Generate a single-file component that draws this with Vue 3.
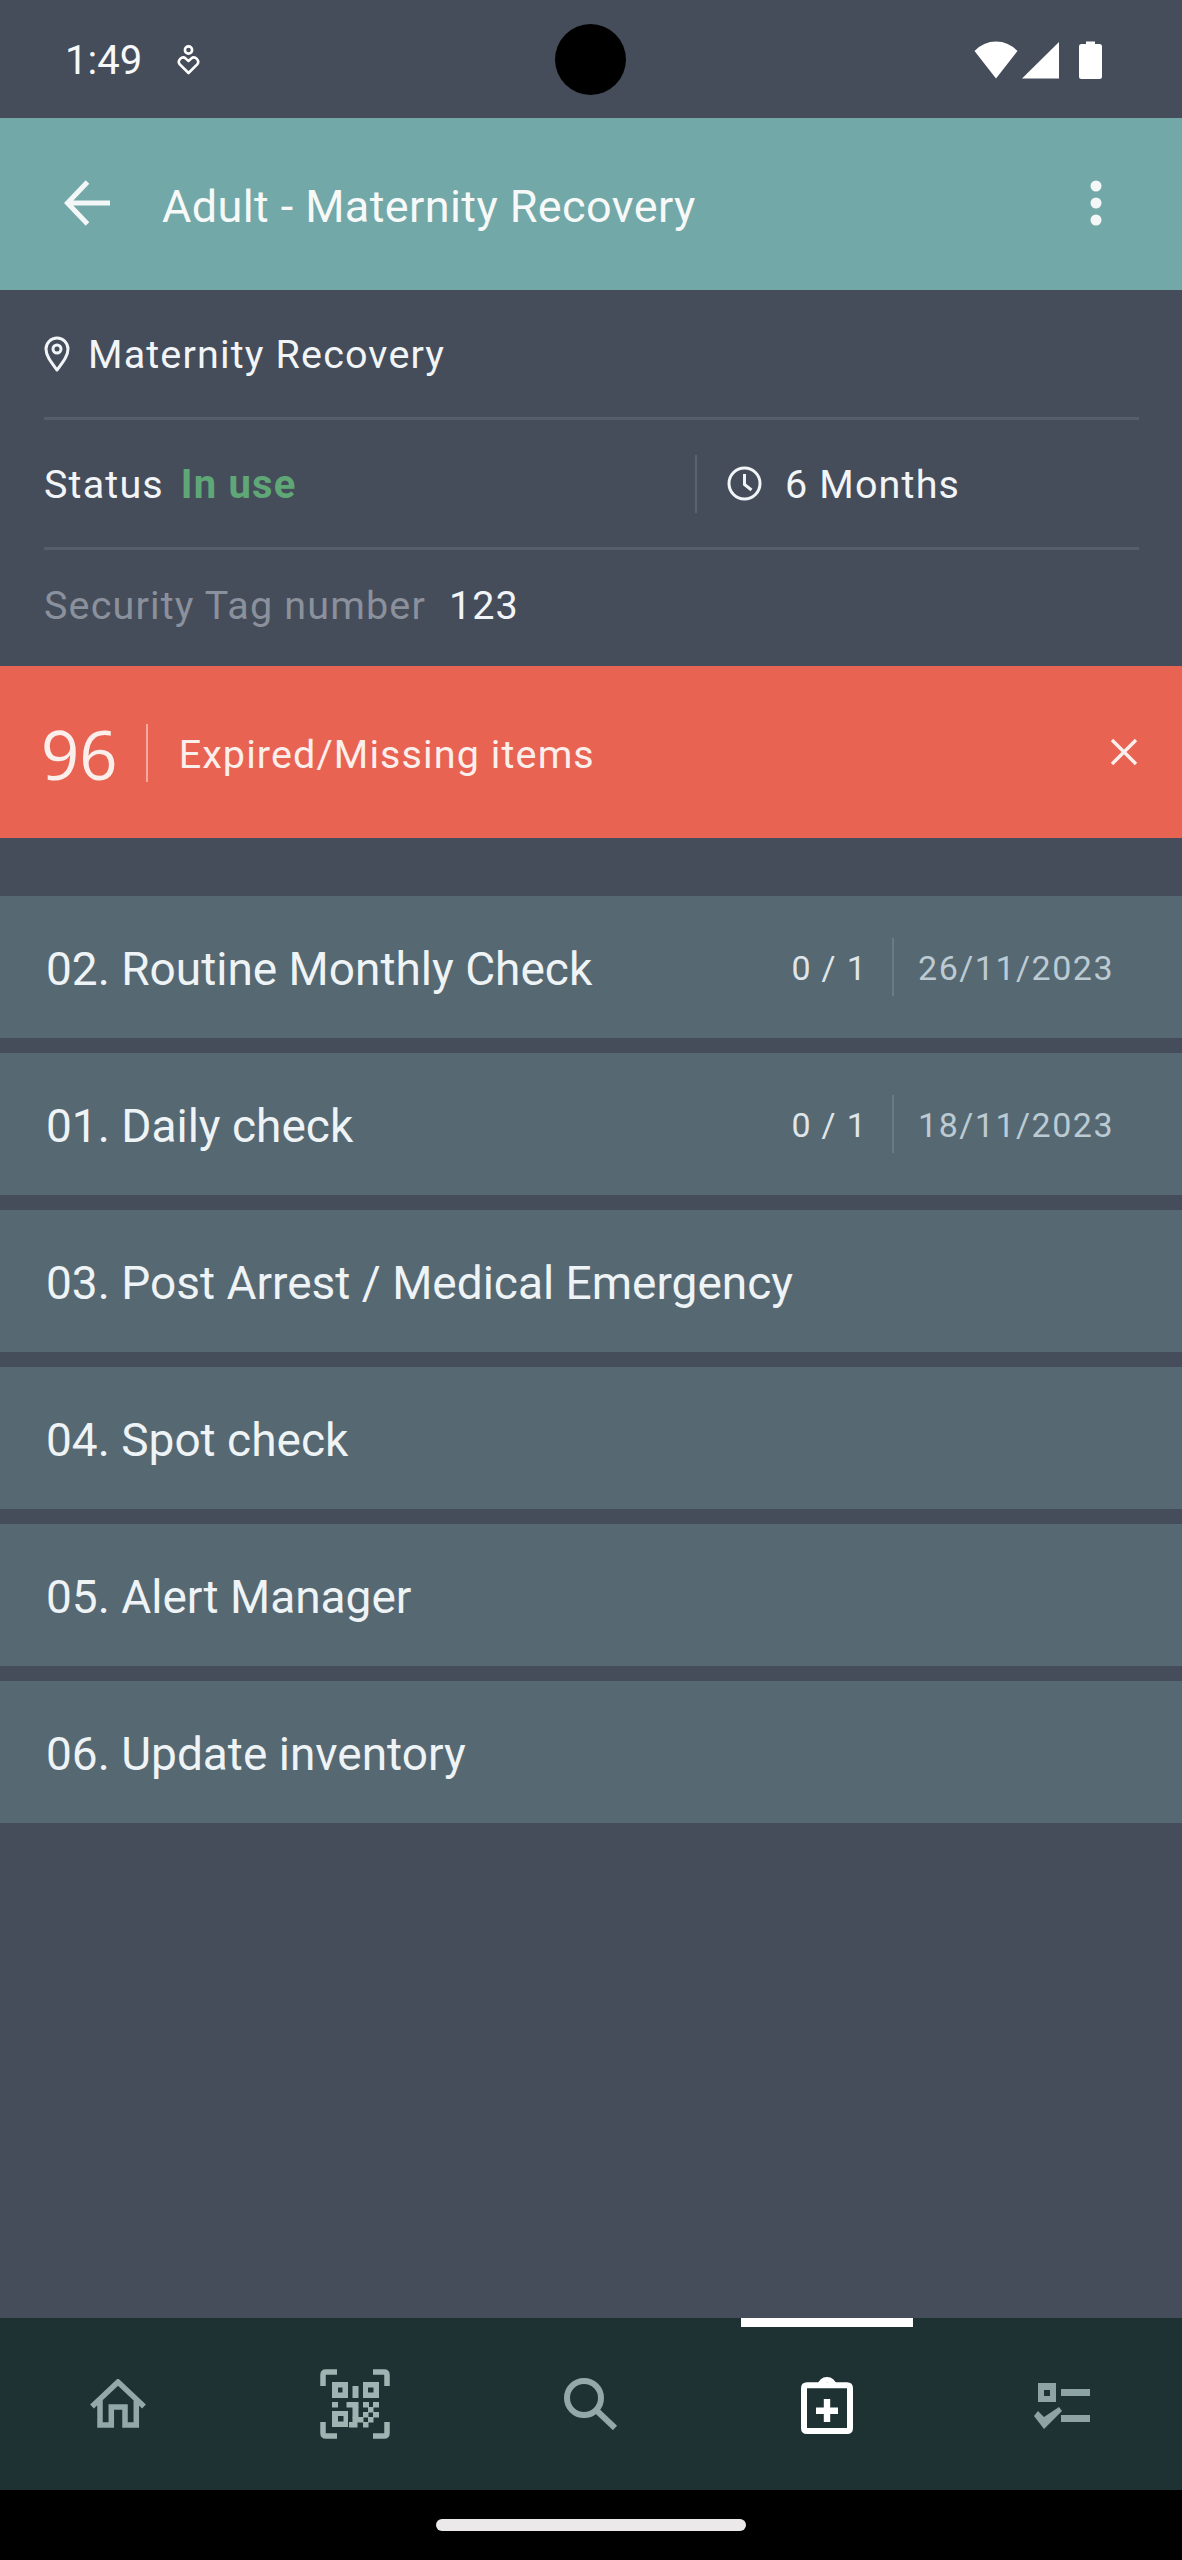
<script setup>
const items = [
  { title: '02. Routine Monthly Check', count: '0 / 1', date: '26/11/2023' },
  { title: '01. Daily check', count: '0 / 1', date: '18/11/2023' },
  { title: '03. Post Arrest / Medical Emergency' },
  { title: '04. Spot check' },
  { title: '05. Alert Manager' },
  { title: '06. Update inventory' },
]
</script>

<template>
  <div class="screen">
    <div class="status-bar">
      <span class="time">1:49</span>
      <svg class="heart" width="23" height="30" viewBox="0 0 23 30" fill="none" stroke="#fff" stroke-width="2.6">
        <circle cx="11.5" cy="5" r="3.6" />
        <path d="M11.5 28 L2.8 19.4 A4.2 4.2 0 0 1 8.8 13.6 L11.5 16 L14.2 13.6 A4.2 4.2 0 0 1 20.2 19.4 Z" stroke-linejoin="round" />
      </svg>
      <div class="camera"></div>
      <div class="sys-icons">
        <svg width="44" height="38" viewBox="0 0 44 38" fill="#fff"><path d="M22 37.5 L0.5 10 Q9.5 0.5 22 0.5 Q34.5 0.5 43.5 10 Z" /></svg>
        <svg width="37" height="38" viewBox="0 0 37 38" fill="#fff"><path d="M37 1 V37.5 H0 Z" /></svg>
        <svg class="battery" width="23" height="38" viewBox="0 0 23 38" fill="#fff"><path d="M7 0.5 H16 V3 H20.5 Q23 3 23 5.5 V35.5 Q23 38 20.5 38 H2.5 Q0 38 0 35.5 V5.5 Q0 3 2.5 3 H7 Z" /></svg>
      </div>
    </div>

    <header class="app-bar">
      <svg class="back" width="46" height="46" viewBox="0 0 46 46" fill="none" stroke="#f4f7f7" stroke-width="5">
        <path d="M46 23 H4 M23.5 2 L3.5 23 L23.5 44" />
      </svg>
      <h1 class="title">Adult - Maternity Recovery</h1>
      <svg class="kebab" width="12" height="46" viewBox="0 0 12 46" fill="#f4f7f7">
        <circle cx="6" cy="6" r="5.5" /><circle cx="6" cy="23" r="5.5" /><circle cx="6" cy="40" r="5.5" />
      </svg>
    </header>

    <section class="info">
      <div class="info-row">
        <svg class="pin" width="26" height="36" viewBox="0 0 26 36" fill="none" stroke="#f2f5f8" stroke-width="3">
          <path d="M13 34 C7 26 2 20 2 13 A11 11 0 0 1 24 13 C24 20 19 26 13 34 Z" stroke-linejoin="round" />
          <circle cx="13" cy="13" r="4" />
        </svg>
        <span class="info-text">Maternity Recovery</span>
      </div>
      <div class="info-row">
        <div class="status-cell">
          <span class="info-text">Status</span>
          <span class="in-use">In use</span>
        </div>
        <div class="months-cell">
          <svg width="35" height="35" viewBox="0 0 35 35" fill="none" stroke="#f2f5f8" stroke-width="3">
            <circle cx="17.5" cy="17.5" r="15.5" />
            <path d="M17.5 8 V18.5 L24.5 24" />
          </svg>
          <span class="info-text">6 Months</span>
        </div>
      </div>
      <div class="info-row tag-row">
        <span class="tag-label">Security Tag number</span>
        <span class="info-text">123</span>
      </div>
    </section>

    <div class="banner">
      <span class="banner-count">96</span>
      <span class="banner-text">Expired/Missing items</span>
      <svg class="banner-close" width="28" height="28" viewBox="0 0 28 28" stroke="#fbefec" stroke-width="3.4">
        <path d="M2 2 L26 26 M26 2 L2 26" />
      </svg>
    </div>

    <main class="list">
      <div v-for="item in items" :key="item.title" class="list-item">
        <span class="item-title">{{ item.title }}</span>
        <template v-if="item.date">
          <span class="item-count">{{ item.count }}</span>
          <span class="item-date">{{ item.date }}</span>
        </template>
      </div>
    </main>

    <nav class="nav">
      <div class="nav-item">
        <svg width="56" height="50" viewBox="0 0 56 50" fill="none" stroke="#93a9a9" stroke-width="5.5">
          <path d="M2 27.500 L28 3 L54 27.500 M10 21 V46 H21.300 V28 H35 V46 H46.300 V21" />
        </svg>
      </div>
      <div class="nav-item">
        <svg width="70" height="70" viewBox="0 0 70 70" fill="#9fb3b3">
          <path fill="none" stroke="#9fb3b3" stroke-width="5.5" d="M3 17 V6 Q3 3 6 3 H17 M53 3 H64 Q67 3 67 6 V17 M3 53 V64 Q3 67 6 67 H17 M53 67 H64 Q67 67 67 64 V53" />
          <path fill-rule="evenodd" d="M12 13 H28 V29 H12 Z M18 18.500 V23.500 H22.500 V18.500 Z" />
          <path fill-rule="evenodd" d="M43 13 H59 V29 H43 Z M48 18.500 V23.500 H53.500 V18.500 Z" />
          <rect x="32.500" y="17" width="6" height="12" />
          <rect x="12" y="33" width="6" height="5.500" />
          <rect x="26.500" y="33" width="12" height="5.500" />
          <rect x="43" y="33" width="6" height="5.500" />
          <rect x="53" y="33" width="6" height="5.500" />
          <rect x="32.500" y="38" width="6" height="11" />
          <rect x="48" y="38" width="5.500" height="5.500" />
          <rect x="43" y="43" width="5.500" height="5.500" />
          <rect x="53" y="43" width="6" height="5.500" />
          <path fill-rule="evenodd" d="M12 42 H28 V58 H12 Z M18 47 V52.500 H23.500 V47 Z" />
          <rect x="32.500" y="48" width="11" height="5.500" />
          <rect x="48" y="48" width="5.500" height="5.500" />
          <rect x="29" y="53" width="8.500" height="5.500" />
          <rect x="43" y="53" width="5.500" height="5.500" />
        </svg>
      </div>
      <div class="nav-item">
        <svg width="54" height="52" viewBox="0 0 54 52" fill="none" stroke="#93a9a9" stroke-width="6">
          <circle cx="20" cy="20" r="17" />
          <path d="M31 31 L51 50" />
        </svg>
      </div>
      <div class="nav-item active">
        <svg class="clipboard" width="52" height="58" viewBox="0 0 52 58" fill="none" stroke="#fff" stroke-width="6">
          <path d="M6 8.300 H46 Q49 8.300 49 11.300 V51 Q49 54 46 54 H6 Q3 54 3 51 V11.300 Q3 8.300 6 8.300 Z" />
          <path fill="#fff" stroke="none" fill-rule="evenodd" d="M26 0 A9.500 9.500 0 0 1 35.500 8 V11 H16.500 V8 A9.500 9.500 0 0 1 26 0 Z M26 5.500 A2.700 2.700 0 1 0 26 10.900 A2.700 2.700 0 1 0 26 5.500 Z" />
          <path stroke-width="6.400" d="M26 22 V45 M15 33.700 H37" />
        </svg>
      </div>
      <div class="nav-item">
        <svg class="checklist" width="56" height="46" viewBox="0 0 56 46" fill="#8ea3a3">
          <path fill-rule="evenodd" d="M4 0 H22 V19 H4 Z M10 7 V13 H16 V7 Z" />
          <rect x="27" y="6" width="29" height="7" /><rect x="27" y="32" width="29" height="7" />
          <path d="M0 33 L4 28 L10 34 L25 24 L28 28 L10 46 Z" />
        </svg>
      </div>
    </nav>

    <div class="gesture-area"><div class="gesture-pill"></div></div>
  </div>
</template>

<style>
html, body { margin: 0; padding: 0; }
</style>

<style scoped>
.screen {
  position: relative;
  width: 1182px;
  height: 2560px;
  display: flex;
  flex-direction: column;
  background: #464d5a;
  font-family: Roboto, "Liberation Sans", sans-serif;
  color: #f2f5f8;
  overflow: hidden;
}
.status-bar {
  position: relative;
  height: 118px;
  flex: none;
  display: flex;
  align-items: center;
  padding: 0 80px 0 65px;
  box-sizing: border-box;
}
.time { font-size: 40px; color: #f6f8fa; line-height: 1; margin-top: 4px; }
.heart { margin-left: 35px; margin-top: 2px; }
.camera {
  position: absolute;
  left: 555px;
  top: 24px;
  width: 71px;
  height: 71px;
  border-radius: 50%;
  background: #000;
}
.sys-icons { margin-left: auto; display: flex; align-items: center; gap: 4px; margin-top: 2px; }
.battery { margin-left: 16px; }
.app-bar {
  height: 172px;
  flex: none;
  background: #72a8a8;
  display: flex;
  align-items: center;
  padding: 0 80px 0 64px;
  box-sizing: border-box;
}
.title { margin: 4px 0 0 52px; font-size: 45px; font-weight: 400; color: #f7f9f9; letter-spacing: 0.4px; }
.kebab { margin-left: auto; margin-top: -2px; }
.back { margin-top: -2px; }
.info { flex: none; padding: 0 43px 0 44px; }
.info-row {
  height: 127px;
  display: flex;
  align-items: center;
  border-bottom: 3px solid #565d6b;
}
.info-row:last-child { border-bottom: 0; height: 116px; padding-bottom: 8px; box-sizing: border-box; }
.pin { margin-right: 18px; }
.info-text { font-size: 39.5px; letter-spacing: 1.15px; color: #f2f5f8; margin-top: 2px; }
.status-cell { width: 651px; display: flex; align-items: center; gap: 17px; }
.in-use { font-size: 40px; font-weight: 700; letter-spacing: 1.2px; color: #5fa777; margin-top: 2px; }
.months-cell {
  height: 58px;
  flex: 1;
  display: flex;
  align-items: center;
  gap: 23px;
  padding-left: 30px;
  border-left: 2px solid #5b6270;
}
.tag-label { font-size: 39.5px; letter-spacing: 1.15px; color: #8b919c; margin-right: 23px; margin-top: 2px; }
.banner {
  height: 172px;
  flex: none;
  background: #e96353;
  display: flex;
  align-items: center;
  padding: 0 44px 0 41px;
  box-sizing: border-box;
  color: #fbefec;
}
.banner-count {
  font-family: "Open Sans", sans-serif;
  font-size: 67px;
  padding-right: 28px;
  border-right: 2px solid #f3a99f;
  height: 58px;
  line-height: 60px;
  margin-top: 1px;
}
.banner-text { font-size: 39.5px; letter-spacing: 1.1px; margin-left: 31px; margin-top: 4px; }
.banner-close { margin-left: auto; }
.list {
  flex: 1;
  padding-top: 58px;
  display: flex;
  flex-direction: column;
  gap: 15px;
}
.list-item {
  height: 142px;
  flex: none;
  background: #566872;
  display: flex;
  align-items: center;
  padding: 0 68px 0 46px;
  box-sizing: border-box;
}
.item-title { font-size: 46px; color: #eef3f6; margin-right: auto; margin-top: 3px; }
.item-count { font-size: 34px; letter-spacing: 1.3px; color: #dfe6ea; margin-top: 2px; }
.item-date {
  font-size: 34px;
  letter-spacing: 1.5px;
  color: #bccbd3;
  height: 58px;
  line-height: 60px;
  margin-left: 25px;
  padding-left: 24px;
  border-left: 2px solid #6a7c88;
}
.nav {
  height: 172px;
  flex: none;
  background: #1f3233;
  display: grid;
  grid-template-columns: repeat(5, 1fr);
}
.nav-item {
  position: relative;
  display: flex;
  align-items: center;
  justify-content: center;
}
.clipboard { margin-top: 4px; }
.checklist { margin-top: 4px; margin-right: 4px; }
.nav-item.active::before {
  content: "";
  position: absolute;
  top: 0;
  left: 32px;
  width: 172px;
  height: 9px;
  background: #fff;
}
.gesture-area {
  height: 70px;
  flex: none;
  background: #000;
  display: flex;
  align-items: center;
  justify-content: center;
}
.gesture-pill {
  width: 310px;
  height: 12px;
  border-radius: 6px;
  background: #ece9ea;
}
</style>
